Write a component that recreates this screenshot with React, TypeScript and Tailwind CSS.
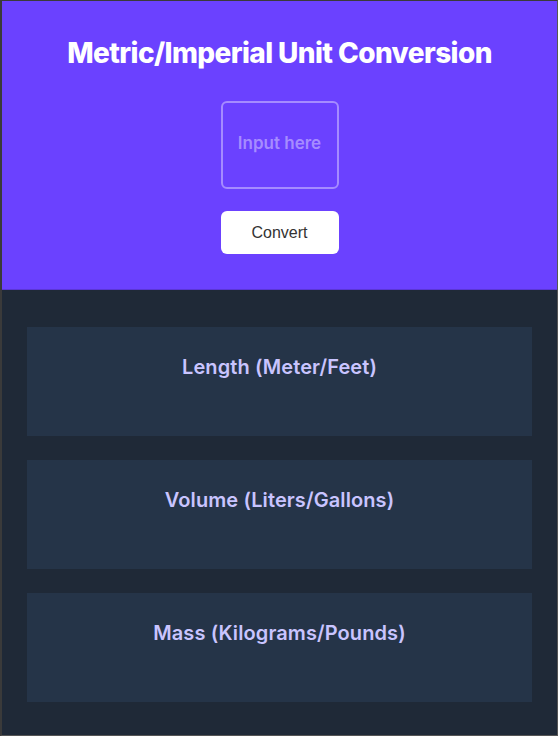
import { useState } from 'react';

const categories = ['Length (Meter/Feet)', 'Volume (Liters/Gallons)', 'Mass (Kilograms/Pounds)'];

export default function App() {
  const [value, setValue] = useState('');

  return (
    <div className="h-[736px] w-[558px] flex flex-col overflow-hidden border-l-2 border-t border-r border-b border-l-[#3a3a3a] border-t-[#3a3a3a] border-r-[#555] border-b-[#555] font-['Inter',sans-serif]">
      <header className="h-[289px] shrink-0 bg-[#6b41ff] border-b border-[#5b36d6] flex flex-col items-center pt-[34px]">
        <h1 className="text-[28px] leading-[36px] font-extrabold tracking-[-0.6px] text-white">
          Metric/Imperial Unit Conversion
        </h1>
        <input
          value={value}
          onChange={(e) => setValue(e.target.value)}
          placeholder="Input here"
          className="mt-[30px] w-[118px] h-[88px] rounded-md border-2 border-[#a58bff] bg-transparent pb-1 text-center text-[17px] font-semibold text-white placeholder:text-[#a68cff] outline-none"
        />
        <button className="mt-[22px] w-[118px] h-[43px] rounded-md bg-white text-[16px] text-[#333] font-['Liberation_Sans',sans-serif]">
          Convert
        </button>
      </header>

      <main className="flex-1 bg-[#1f2937] px-[25px] pt-[37px] flex flex-col gap-[24px]">
        {categories.map((c) => (
          <div key={c} className="h-[109px] bg-[#253448] flex justify-center pt-[26px]">
            <h2 className="text-[20px] leading-[28px] font-semibold tracking-[0.1px] text-[#c9c4ff]">{c}</h2>
          </div>
        ))}
      </main>
    </div>
  );
}
